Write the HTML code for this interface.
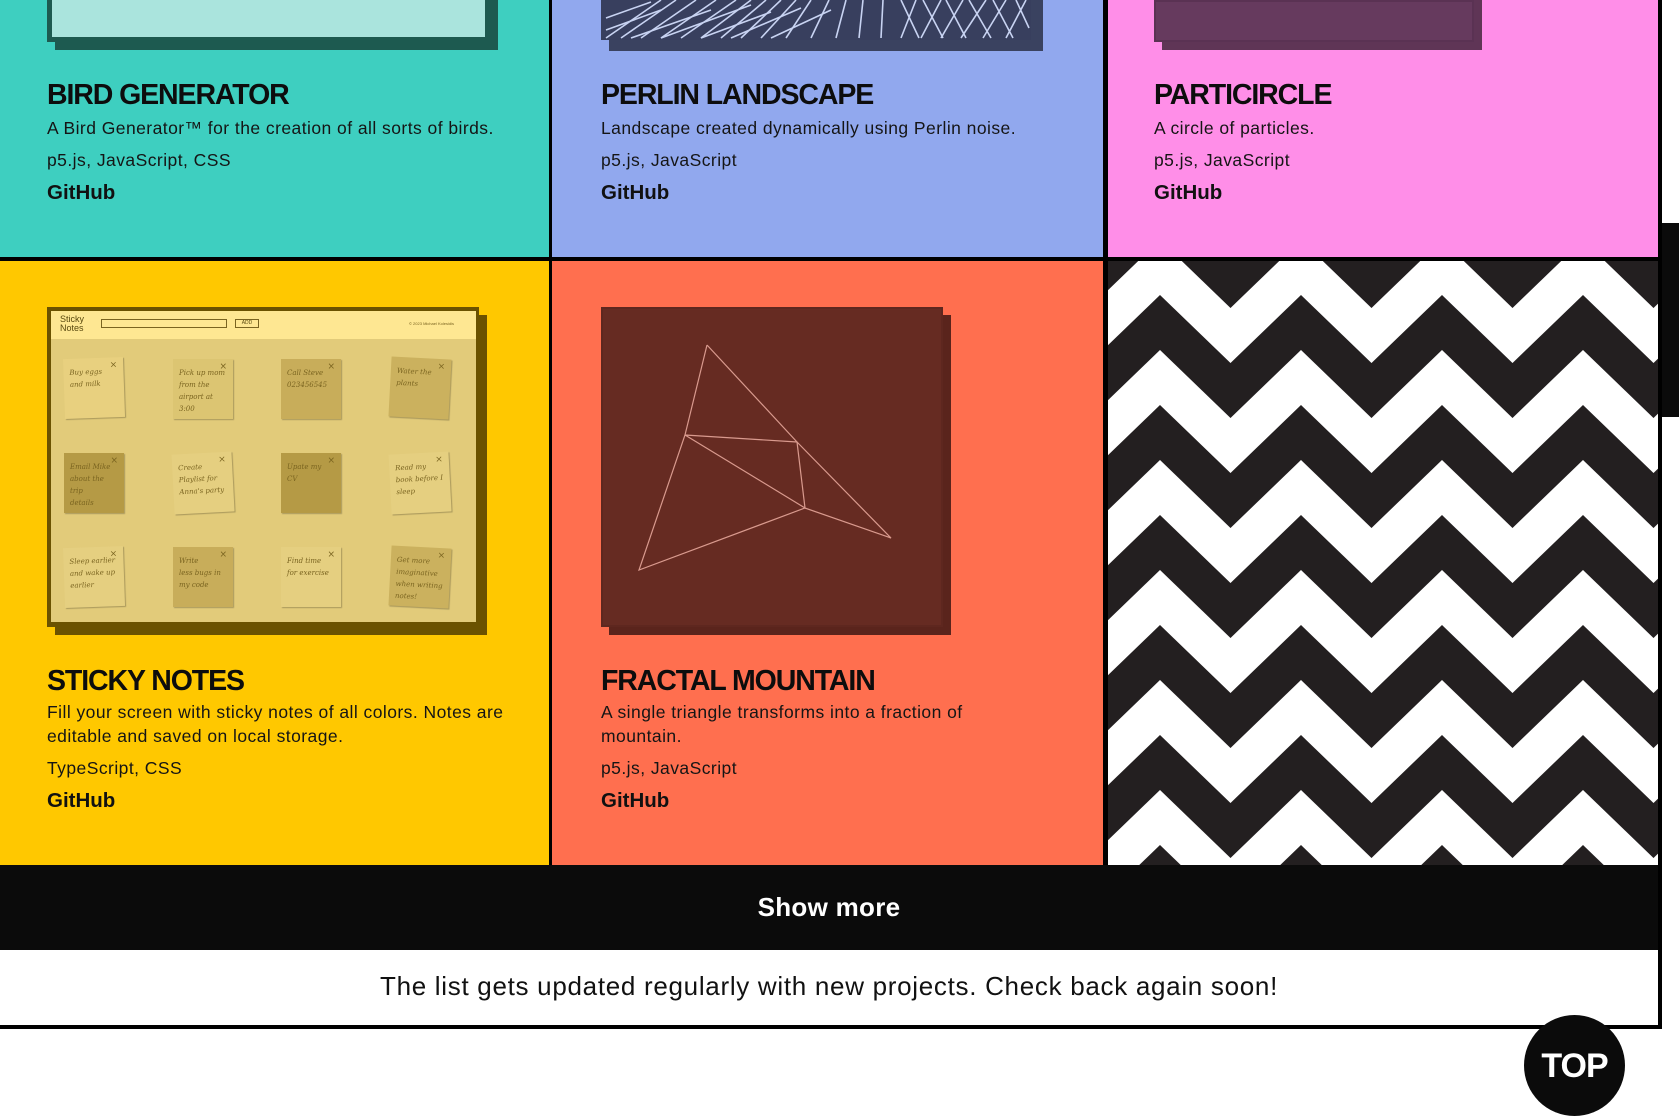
<!DOCTYPE html>
<html><head><meta charset="utf-8"><style>
*{margin:0;padding:0;box-sizing:border-box}
body{width:1679px;height:1094px;overflow:hidden;background:#fff;font-family:"Liberation Sans",sans-serif;position:relative;color:#111}
.a{position:absolute}
.t{position:absolute;font-weight:bold;font-size:28.5px;letter-spacing:-1.1px;color:#0d0d0d}
.d{position:absolute;font-size:17.5px;line-height:24px;letter-spacing:0.45px;color:#151515}
.g{position:absolute;font-weight:bold;font-size:20.5px;color:#111}
.note{position:absolute;width:60px;height:60px;font-family:"DejaVu Serif",serif;font-style:italic;font-size:7px;line-height:12px;color:#7a6420;padding:8px 6px;box-shadow:1px 1px 1px rgba(0,0,0,.25)}
.note:after{content:"×";position:absolute;right:6px;top:2px;font-style:normal;font-size:9px}
</style></head><body>
<div class="a" style="left:0;top:0;width:549px;height:257px;background:#3ecfc0"></div>
<div class="a" style="left:552px;top:0;width:551px;height:257px;background:#91a8ee"></div>
<div class="a" style="left:1106px;top:0;width:552px;height:257px;background:#ff8ee8"></div>
<div class="a" style="left:549px;top:0;width:3px;height:865px;background:#000"></div>
<div class="a" style="left:1103px;top:0;width:5px;height:865px;background:#000"></div>
<div class="a" style="left:0;top:257px;width:1662px;height:4px;background:#000"></div>
<div class="a" style="left:1658px;top:0;width:4px;height:1029px;background:#000"></div>
<div class="a" style="left:0;top:261px;width:549px;height:604px;background:#ffc800"></div>
<div class="a" style="left:552px;top:261px;width:551px;height:604px;background:#ff6f4f"></div>
<div class="a" style="left:1662px;top:223px;width:17px;height:194px;background:#0b0b0b"></div>

<div class="a" style="left:55px;top:0;width:443px;height:50px;background:#1d5a50"></div>
<div class="a" style="left:47px;top:0;width:443px;height:42px;background:#1d5a50"></div>
<div class="a" style="left:52px;top:0;width:433px;height:37px;background:#aae4dd"></div>

<div class="a" style="left:609px;top:0;width:434px;height:51px;background:#3a4260"></div>
<svg class="a" style="left:601px;top:0" width="430" height="40">
<rect width="430" height="40" fill="#383f5e"/>
<g stroke="#c8d3f2" stroke-width="1.6" fill="none">
<path d="M5 38 L60 0M20 38 L75 0M40 38L95 0M60 38L115 0M80 38L135 0M100 38L150 0M120 38L165 0M140 38L180 0M160 38L195 0M185 38L210 0M210 38L228 0M235 38L245 0M258 38L262 0M280 38L282 0"/>
<path d="M5 30L60 10M5 18L50 2M30 38L110 10M60 38L150 5M100 38L170 12M130 38L200 8M170 38L230 10"/>
<path d="M300 38L315 0M320 38L340 0M340 38L362 0M360 38L385 0M382 38L405 0M405 38L425 0M300 0L318 38M322 0L342 38M345 0L365 38M368 0L390 38M392 0L412 38M415 0L428 28"/>
</g></svg>

<div class="a" style="left:1162px;top:0;width:320px;height:50px;background:#5f3556"></div>
<div class="a" style="left:1154px;top:0;width:320px;height:42px;background:#663a5e;border:2px solid #5a3253"></div>

<div class="t" style="left:47px;top:79px">BIRD GENERATOR</div>
<div class="d" style="left:47px;top:116px">A Bird Generator™ for the creation of all sorts of birds.</div>
<div class="d" style="left:47px;top:148px">p5.js, JavaScript, CSS</div>
<div class="g" style="left:47px;top:181px">GitHub</div>

<div class="t" style="left:601px;top:79px">PERLIN LANDSCAPE</div>
<div class="d" style="left:601px;top:116px">Landscape created dynamically using Perlin noise.</div>
<div class="d" style="left:601px;top:148px">p5.js, JavaScript</div>
<div class="g" style="left:601px;top:181px">GitHub</div>

<div class="t" style="left:1154px;top:79px">PARTICIRCLE</div>
<div class="d" style="left:1154px;top:116px">A circle of particles.</div>
<div class="d" style="left:1154px;top:148px">p5.js, JavaScript</div>
<div class="g" style="left:1154px;top:181px">GitHub</div>

<div class="a" style="left:55px;top:315px;width:432px;height:320px;background:#6b5200"></div>
<div class="a" style="left:47px;top:307px;width:432px;height:320px;background:#6b5200"></div>
<div class="a" style="left:51px;top:311px;width:425px;height:311px;background:#e2cb7a;overflow:hidden">
  <div class="a" style="left:0;top:0;width:425px;height:28px;background:#fee792"></div>
  <div class="a" style="left:9px;top:4px;font-size:9px;line-height:9px;color:#5a4a10">Sticky<br>Notes</div>
  <div class="a" style="left:50px;top:8px;width:126px;height:9px;border:1px solid #7a6420"></div>
  <div class="a" style="left:184px;top:8px;width:24px;height:9px;border:1px solid #7a6420;font-size:5px;text-align:center;line-height:7px;color:#5a4a10">ADD</div>
  <div class="a" style="left:358px;top:10px;font-size:4px;color:#7a6420">© 2023 Michael Kolesidis</div>
  <div class="note" style="left:13px;top:47px;background:#e8d07f;transform:rotate(-2deg)">Buy eggs<br>and milk</div>
  <div class="note" style="left:122px;top:48px;background:#dcc572">Pick up mom<br>from the<br>airport at 3:00</div>
  <div class="note" style="left:230px;top:48px;background:#c8ad5a">Call Steve<br>023456545</div>
  <div class="note" style="left:339px;top:47px;background:#cbb15e;transform:rotate(3deg)">Water the<br>plants</div>
  <div class="note" style="left:13px;top:142px;background:#b59a45">Email Mike<br>about the trip<br>details</div>
  <div class="note" style="left:122px;top:142px;background:#e5cf80;transform:rotate(-3deg)">Create<br>Playlist for<br>Anna's party</div>
  <div class="note" style="left:230px;top:142px;background:#b59a45">Upate my<br>CV</div>
  <div class="note" style="left:339px;top:142px;background:#e5cf80;transform:rotate(-3deg)">Read my<br>book before I<br>sleep</div>
  <div class="note" style="left:13px;top:236px;background:#e5cf80;transform:rotate(-2deg)">Sleep earlier<br>and wake up<br>earlier</div>
  <div class="note" style="left:122px;top:236px;background:#c8ad5a">Write<br>less bugs in<br>my code</div>
  <div class="note" style="left:230px;top:236px;background:#e5cf80">Find time<br>for exercise</div>
  <div class="note" style="left:339px;top:236px;background:#cbb15e;transform:rotate(3deg)">Get more<br>imaginative<br>when writing<br>notes!</div>
</div>

<div class="a" style="left:609px;top:315px;width:342px;height:320px;background:#5a241c"></div>
<div class="a" style="left:601px;top:307px;width:342px;height:320px;background:#662b22;border:2px solid #5e271f"></div>
<svg class="a" style="left:0;top:0" width="1679" height="1094"><g stroke="#d99a8e" stroke-width="1.2" fill="none">
<path d="M707 345L685 435L639 570L805 508L891 538L797 442L707 345M685 435L797 442L805 508L685 435"/></g></svg>

<div class="t" style="left:47px;top:665px">STICKY NOTES</div>
<div class="d" style="left:47px;top:700px;width:460px">Fill your screen with sticky notes of all colors. Notes are editable and saved on local storage.</div>
<div class="d" style="left:47px;top:756px">TypeScript, CSS</div>
<div class="g" style="left:47px;top:789px">GitHub</div>

<div class="t" style="left:601px;top:665px">FRACTAL MOUNTAIN</div>
<div class="d" style="left:601px;top:700px;width:400px">A single triangle transforms into a fraction of mountain.</div>
<div class="d" style="left:601px;top:756px">p5.js, JavaScript</div>
<div class="g" style="left:601px;top:789px">GitHub</div>

<svg class="a" style="left:1108px;top:261px" width="550" height="604">
<defs><pattern id="z" width="141" height="110" patternUnits="userSpaceOnUse" x="52" y="34">
<polygon points="0,0 70.5,68 141,0 141,55 70.5,123 0,55" fill="#231f20"/>
<polygon points="0,-110 70.5,-42 141,-110 141,-55 70.5,13 0,-55" fill="#231f20"/></pattern></defs>
<rect width="550" height="604" fill="#fff"/><rect width="550" height="604" fill="url(#z)"/>
</svg>

<div class="a" style="left:0;top:865px;width:1658px;height:85px;background:#0b0b0b;color:#fff;font-weight:bold;font-size:26px;text-align:center;line-height:85px;letter-spacing:0.3px">Show more</div>
<div class="a" style="left:0;top:950px;width:1658px;height:75px;font-size:26px;letter-spacing:0.7px;text-align:center;line-height:72px;color:#111">The list gets updated regularly with new projects. Check back again soon!</div>
<div class="a" style="left:0;top:1025px;width:1662px;height:4px;background:#000"></div>
<div class="a" style="left:1524px;top:1015px;width:101px;height:101px;border-radius:50%;background:#0b0b0b;color:#fff;font-weight:bold;font-size:34px;text-align:center;line-height:102px;letter-spacing:-1px">TOP</div>
</body></html>
